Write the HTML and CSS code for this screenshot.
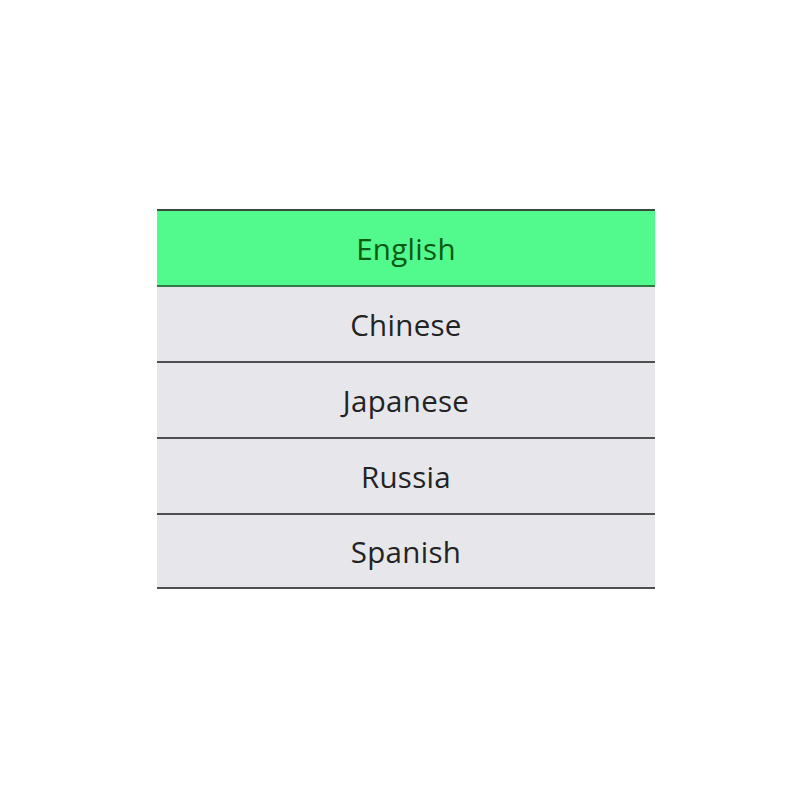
FILE: index.html
```html
<!DOCTYPE html>
<html>
<head>
<meta charset="utf-8">
<link rel="stylesheet" href="styles.css">
</head>
<body>
<div class="page">
  <ul class="lang-list">
    <li class="item active">English</li>
    <li class="item">Chinese</li>
    <li class="item">Japanese</li>
    <li class="item">Russia</li>
    <li class="item last">Spanish</li>
  </ul>
</div>
</body>
</html>
```
FILE: styles.css
```css
html, body {
  margin: 0;
  padding: 0;
  background: #ffffff;
}
.page {
  width: 800px;
  height: 800px;
  padding-top: 209px;
  box-sizing: border-box;
}
.lang-list {
  list-style: none;
  margin: 0 0 0 157px;
  padding: 0;
  width: 498px;
  border-top: 2px solid #3a4a3e;
}
.item {
  height: 74px;
  border-bottom: 2px solid #4f4f4f;
  background: #e7e7eb;
  display: flex;
  align-items: center;
  justify-content: center;
  font-family: "Open Sans", "Noto Sans", sans-serif;
  font-size: 29.5px;
  color: #232323;
  letter-spacing: 0.3px;
}
.item.last {
  height: 72px;
}
.item.active {
  background: #52f98c;
  color: #0b5a14;
  border-bottom-color: #2f7a45;
}
```
